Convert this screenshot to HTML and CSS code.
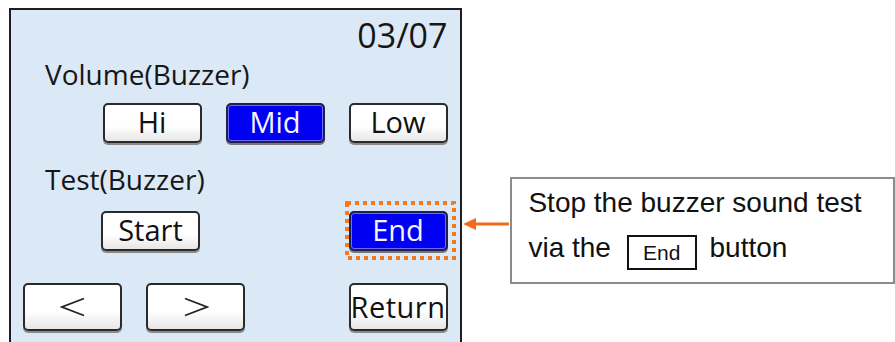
FILE: index.html
```html
<!DOCTYPE html>
<html lang="en">
<head>
  <meta charset="UTF-8">
  <title>Buzzer test</title>
  <link rel="stylesheet" href="styles.css">
</head>
<body>
  <div class="page">
    <div class="screen">
      <div class="page-no">03/07</div>
      <div class="label">Volume(Buzzer)</div>
      <div class="row row-volume">
        <span class="btn">Hi</span>
        <span class="btn btn-on">Mid</span>
        <span class="btn">Low</span>
      </div>
      <div class="label label-test">Test(Buzzer)</div>
      <div class="row row-test">
        <span class="btn btn-start">Start</span>
        <span class="mark">
          <span class="btn btn-on">End</span>
          <svg class="mark-box" width="111" height="59" viewBox="0 0 111 59">
            <rect x="2" y="2" width="107" height="55" fill="none" stroke="#f47a20" stroke-width="4" stroke-dasharray="4 4"/>
          </svg>
        </span>
      </div>
      <div class="row row-nav">
        <span class="btn btn-tall" aria-label="Previous">
          <svg class="chev" width="26" height="20" viewBox="0 0 26 20"><polyline points="24,1.5 2,10 24,18.5" fill="none" stroke="#222" stroke-width="1.8"/></svg>
        </span>
        <span class="btn btn-tall btn-next" aria-label="Next">
          <svg class="chev" width="26" height="20" viewBox="0 0 26 20"><polyline points="2,1.5 24,10 2,18.5" fill="none" stroke="#222" stroke-width="1.8"/></svg>
        </span>
        <span class="btn btn-tall btn-return">Return</span>
      </div>
    </div>

    <svg class="arrow" width="47" height="14" viewBox="0 0 47 14">
      <path d="M0 7 L13 1 L13 13 Z" fill="#f26b1d"/>
      <rect x="12" y="5.5" width="35" height="3" fill="#f26b1d"/>
    </svg>

    <div class="note">
      <div>Stop the buzzer sound test</div>
      <div>via the <span class="key">End</span> button</div>
    </div>
  </div>
</body>
</html>
```

FILE: styles.css
```css
html, body {
  margin: 0;
  height: 342px;
  overflow: hidden;
  background: #fff;
}
.page {
  display: flex;
  align-items: flex-start;
}
.screen {
  box-sizing: border-box;
  width: 453px;
  height: 334px;
  margin: 8px 0 0 9px;
  padding: 5px 12px 0 12px;
  border: 2px solid #1e1e22;
  border-bottom: none;
  background: #dbe8f6;
  font-family: "Open Sans", "DejaVu Sans", sans-serif;
  color: #161616;
}
.page-no {
  text-align: right;
  font-size: 34px;
  line-height: 40px;
}
.label {
  margin: 2px 0 0 22px;
  font-size: 28px;
  line-height: 34px;
}
.label-test {
  margin-top: 19px;
}
.row {
  display: flex;
  align-items: flex-start;
}
.row-volume {
  justify-content: flex-end;
  gap: 24px;
  margin-top: 12px;
}
.row-test {
  margin-top: 15px;
}
.row-nav {
  margin-top: 32px;
}
.btn {
  box-sizing: border-box;
  width: 99px;
  height: 40px;
  border: 2px solid #2a2a2a;
  border-radius: 5px;
  background: linear-gradient(#ffffff 0%, #ffffff 60%, #e6e6e6 100%);
  box-shadow: 0 2px 0 #8a8a8a;
  text-align: center;
  font-size: 29px;
  line-height: 34px;
  color: #111;
}
.btn-on {
  display: block;
  background: #0000f2;
  border-color: #20204a;
  box-shadow: inset 0 0 0 1px #6a6aff, 0 2px 0 #777;
  color: #f4f4ff;
}
.btn-start {
  margin-left: 78px;
}
.mark {
  position: relative;
  margin-left: auto;
}
.mark-box {
  position: absolute;
  left: -4px;
  top: -10px;
}
.btn-tall {
  display: flex;
  align-items: center;
  justify-content: center;
  height: 48px;
  line-height: 42px;
}
.chev {
  display: block;
}
.btn-next {
  margin-left: 24px;
}
.btn-return {
  margin-left: auto;
  letter-spacing: 0.5px;
}
.arrow {
  margin: 217px 1px 0 1px;
}
.note {
  box-sizing: border-box;
  width: 385px;
  height: 107px;
  margin-top: 177px;
  padding: 1px 0 0 16px;
  border: 2px solid #8c8c8c;
  font-family: "Liberation Sans", Arial, sans-serif;
  font-size: 28px;
  line-height: 45px;
  color: #111;
}
.key {
  display: inline-block;
  box-sizing: border-box;
  width: 70px;
  height: 35px;
  margin: 0 5px 0 8px;
  border: 2px solid #111;
  text-align: center;
  font-size: 21px;
  line-height: 31px;
  vertical-align: -3px;
}
```
